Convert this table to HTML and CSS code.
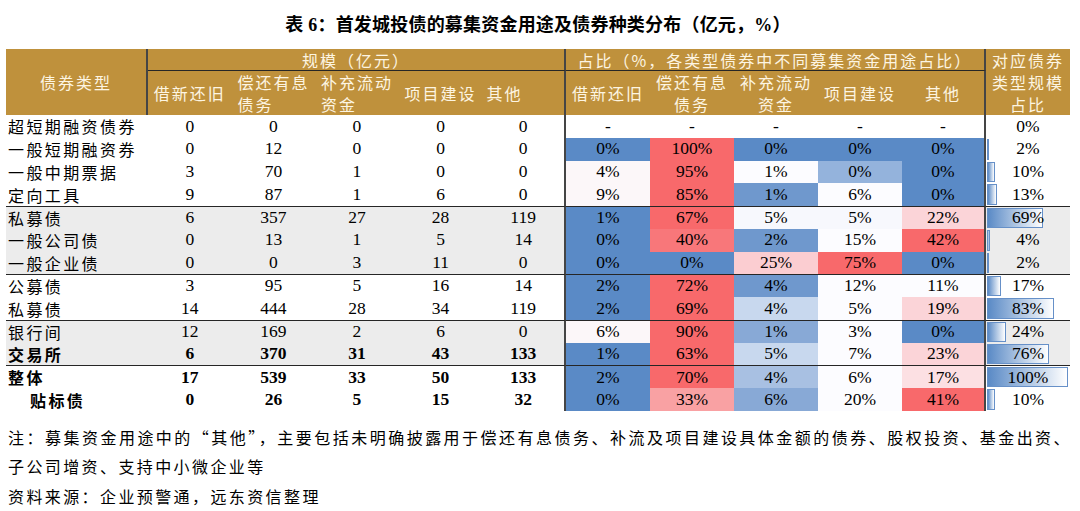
FILE: index.html
```
<!DOCTYPE html>
<html lang="zh-CN">
<head>
<meta charset="utf-8">
<link rel="stylesheet" href="styles.css">
</head>
<body>
<div class="page">
  <div class="title">表 6：首发城投债的募集资金用途及债券种类分布（亿元，%）</div>
  <div class="grid">
    <div class="h h-type vline">债券类型</div>
    <div class="h h-scale vline hline">规模（亿元）</div>
    <div class="h h-share vline hline">占比（%，各类型债券中不同募集资金用途占比）</div>
    <div class="h h-ratio">对应债券<br>类型规模<br>占比</div>

    <div class="h"><span>借新还旧</span></div>
    <div class="h"><span class="blk">偿还有息<br>债务</span></div>
    <div class="h"><span class="blk">补充流动<br>资金</span></div>
    <div class="h"><span>项目建设</span></div>
    <div class="h h-left vline"><span>其他</span></div>
    <div class="h"><span>借新还旧</span></div>
    <div class="h"><span>偿还有息<br>债务</span></div>
    <div class="h"><span>补充流动<br>资金</span></div>
    <div class="h"><span>项目建设</span></div>
    <div class="h vline"><span>其他</span></div>

    <div class="row">
      <div class="c lbl">超短期融资债券</div>
      <div class="c">0</div><div class="c">0</div><div class="c">0</div><div class="c">0</div><div class="c vline">0</div>
      <div class="c">-</div><div class="c">-</div><div class="c">-</div><div class="c">-</div><div class="c vline">-</div>
      <div class="c ratio">0%</div>
    </div>
    <div class="row">
      <div class="c lbl">一般短期融资券</div>
      <div class="c">0</div><div class="c">12</div><div class="c">0</div><div class="c">0</div><div class="c vline">0</div>
      <div class="c b0">0%</div><div class="c r0">100%</div><div class="c b0">0%</div><div class="c b0">0%</div><div class="c b0 vline">0%</div>
      <div class="c ratio"><div class="track"><div class="bar" style="width:2%"></div></div><span>2%</span></div>
    </div>
    <div class="row">
      <div class="c lbl">一般中期票据</div>
      <div class="c">3</div><div class="c">70</div><div class="c">1</div><div class="c">0</div><div class="c vline">0</div>
      <div class="c wp">4%</div><div class="c r0">95%</div><div class="c w0">1%</div><div class="c b3">0%</div><div class="c b0 vline">0%</div>
      <div class="c ratio"><div class="track"><div class="bar" style="width:10%"></div></div><span>10%</span></div>
    </div>
    <div class="row">
      <div class="c lbl">定向工具</div>
      <div class="c">9</div><div class="c">87</div><div class="c">1</div><div class="c">6</div><div class="c vline">0</div>
      <div class="c wp">9%</div><div class="c r0">85%</div><div class="c b1">1%</div><div class="c w0">6%</div><div class="c b0 vline">0%</div>
      <div class="c ratio"><div class="track"><div class="bar" style="width:13%"></div></div><span>13%</span></div>
    </div>

    <div class="row gray sep">
      <div class="c lbl">私募债</div>
      <div class="c">6</div><div class="c">357</div><div class="c">27</div><div class="c">28</div><div class="c vline">119</div>
      <div class="c b0">1%</div><div class="c r0">67%</div><div class="c w1">5%</div><div class="c w1">5%</div><div class="c p2 vline">22%</div>
      <div class="c ratio"><div class="track"><div class="bar" style="width:69%"></div></div><span>69%</span></div>
    </div>
    <div class="row gray">
      <div class="c lbl">一般公司债</div>
      <div class="c">0</div><div class="c">13</div><div class="c">1</div><div class="c">5</div><div class="c vline">14</div>
      <div class="c b0">0%</div><div class="c r1">40%</div><div class="c b1">2%</div><div class="c w0">15%</div><div class="c r0 vline">42%</div>
      <div class="c ratio"><div class="track"><div class="bar" style="width:4%"></div></div><span>4%</span></div>
    </div>
    <div class="row gray">
      <div class="c lbl">一般企业债</div>
      <div class="c">0</div><div class="c">0</div><div class="c">3</div><div class="c">11</div><div class="c vline">0</div>
      <div class="c b0">0%</div><div class="c b0">0%</div><div class="c p3">25%</div><div class="c r0">75%</div><div class="c b0 vline">0%</div>
      <div class="c ratio"><div class="track"><div class="bar" style="width:2%"></div></div><span>2%</span></div>
    </div>

    <div class="row sep">
      <div class="c lbl">公募债</div>
      <div class="c">3</div><div class="c">95</div><div class="c">5</div><div class="c">16</div><div class="c vline">14</div>
      <div class="c b0">2%</div><div class="c r0">72%</div><div class="c b1">4%</div><div class="c w0">12%</div><div class="c w0 vline">11%</div>
      <div class="c ratio"><div class="track"><div class="bar" style="width:17%"></div></div><span>17%</span></div>
    </div>
    <div class="row">
      <div class="c lbl">私募债</div>
      <div class="c">14</div><div class="c">444</div><div class="c">28</div><div class="c">34</div><div class="c vline">119</div>
      <div class="c b0">2%</div><div class="c r0">69%</div><div class="c b5">4%</div><div class="c w0">5%</div><div class="c p2 vline">19%</div>
      <div class="c ratio"><div class="track"><div class="bar" style="width:83%"></div></div><span>83%</span></div>
    </div>

    <div class="row gray sep">
      <div class="c lbl">银行间</div>
      <div class="c">12</div><div class="c">169</div><div class="c">2</div><div class="c">6</div><div class="c vline">0</div>
      <div class="c wp">6%</div><div class="c r0">90%</div><div class="c b2">1%</div><div class="c w0">3%</div><div class="c b0 vline">0%</div>
      <div class="c ratio"><div class="track"><div class="bar" style="width:24%"></div></div><span>24%</span></div>
    </div>
    <div class="row gray strong">
      <div class="c lbl">交易所</div>
      <div class="c num">6</div><div class="c num">370</div><div class="c num">31</div><div class="c num">43</div><div class="c num vline">133</div>
      <div class="c b0">1%</div><div class="c r0">63%</div><div class="c b5">5%</div><div class="c w0">7%</div><div class="c p2 vline">23%</div>
      <div class="c ratio"><div class="track"><div class="bar" style="width:76%"></div></div><span>76%</span></div>
    </div>

    <div class="row sep strong">
      <div class="c lbl">整体</div>
      <div class="c num">17</div><div class="c num">539</div><div class="c num">33</div><div class="c num">50</div><div class="c num vline">133</div>
      <div class="c b0">2%</div><div class="c r0">70%</div><div class="c b4">4%</div><div class="c w0">6%</div><div class="c p1 vline">17%</div>
      <div class="c ratio"><div class="track"><div class="bar" style="width:100%"></div></div><span>100%</span></div>
    </div>
    <div class="row strong">
      <div class="c lbl indent">贴标债</div>
      <div class="c num">0</div><div class="c num">26</div><div class="c num">5</div><div class="c num">15</div><div class="c num vline">32</div>
      <div class="c b0">0%</div><div class="c p4">33%</div><div class="c b2">6%</div><div class="c w0">20%</div><div class="c r0 vline">41%</div>
      <div class="c ratio"><div class="track"><div class="bar" style="width:10%"></div></div><span>10%</span></div>
    </div>
  </div>

  <div class="notes">
    <p class="note-wide">注：募集资金用途中的“其他”，主要包括未明确披露用于偿还有息债务、补流及项目建设具体金额的债券、股权投资、基金出资、</p>
    <p>子公司增资、支持中小微企业等</p>
    <p>资料来源：企业预警通，远东资信整理</p>
  </div>
</div>
</body>
</html>
```
FILE: styles.css
```
html, body {
  margin: 0;
  padding: 0;
  background: #ffffff;
}

body {
  font-family: "Liberation Serif", "Noto Sans CJK SC", serif;
  color: #000000;
}

.page {
  width: 1064px;
  padding-left: 6px;
}

.title {
  height: 46px;
  display: flex;
  align-items: center;
  justify-content: center;
  font-weight: bold;
  font-size: 18px;
  letter-spacing: 0.2px;
  margin-bottom: 3px;
}

.grid {
  display: grid;
  grid-template-columns: 142px repeat(5, 83.6px) repeat(5, 84px) 84px;
  grid-template-rows: 22px 44px repeat(13, 22.77px);
}

.row {
  display: contents;
}

/* header */
.h {
  box-sizing: border-box;
  background: #bf913c;
  color: #fdf5e2;
  font-family: "Noto Sans CJK SC", sans-serif;
  font-size: 16px;
  letter-spacing: 2px;
  line-height: 22px;
  display: flex;
  align-items: center;
  justify-content: center;
  text-align: center;
}

.h-type {
  grid-row: span 2;
}

.h-scale,
.h-share {
  grid-column: span 5;
}

.h-ratio {
  grid-row: span 2;
  line-height: 22px;
}

.h .blk {
  text-align: left;
}

.h-left {
  justify-content: flex-start;
  padding-left: 4px;
}

.hline {
  border-bottom: 1px solid #262626;
}

.vline {
  border-right: 2px solid #454545;
}

/* body cells */
.c {
  box-sizing: border-box;
  display: flex;
  align-items: center;
  justify-content: center;
  font-size: 17.5px;
  line-height: 1;
  white-space: nowrap;
}

.lbl {
  justify-content: flex-start;
  padding-left: 2px;
  font-family: "Noto Sans CJK SC", sans-serif;
  font-size: 16px;
  letter-spacing: 2.4px;
}

.indent {
  padding-left: 24px;
}

.gray > .c {
  background-color: #ececec;
}

.sep > .c {
  border-top: 1px solid #262626;
}

.strong > .num,
.strong > .lbl {
  font-weight: bold;
}

/* colour scale */
.gray > .b0, .c.b0 { background-color: #5a8ac6; }
.gray > .b1, .c.b1 { background-color: #6f98cd; }
.gray > .b2, .c.b2 { background-color: #88a9d6; }
.gray > .b3, .c.b3 { background-color: #94b3dc; }
.gray > .b4, .c.b4 { background-color: #a8c0e2; }
.gray > .b5, .c.b5 { background-color: #c8d8ee; }
.gray > .w0, .c.w0 { background-color: #fcfcff; }
.gray > .w1, .c.w1 { background-color: #f7f8fd; }
.gray > .wp, .c.wp { background-color: #fcf7f9; }
.gray > .p1, .c.p1 { background-color: #fce0e3; }
.gray > .p2, .c.p2 { background-color: #fbd4d8; }
.gray > .p3, .c.p3 { background-color: #fbcdd1; }
.gray > .p4, .c.p4 { background-color: #f9a1a3; }
.gray > .r0, .c.r0 { background-color: #f8696b; }
.gray > .r1, .c.r1 { background-color: #f8777a; }

/* data bar column */
.ratio {
  position: relative;
}

.ratio > span {
  position: relative;
}

.track {
  position: absolute;
  left: 1px;
  top: 1px;
  bottom: 1px;
  width: 81px;
}

.bar {
  box-sizing: border-box;
  height: 100%;
  background: linear-gradient(90deg, #5a8ac6 0%, #ffffff 100%);
  border: 1px solid #6690c8;
}

/* notes */
.notes {
  margin-top: 12px;
  padding-left: 2px;
  font-family: "Noto Sans CJK SC", sans-serif;
  font-size: 16px;
  letter-spacing: 2.4px;
  line-height: 29.5px;
}

.notes p {
  margin: 0;
  white-space: nowrap;
}

.note-wide {
  text-align: justify;
  text-align-last: justify;
  width: 1064px;
}
```
